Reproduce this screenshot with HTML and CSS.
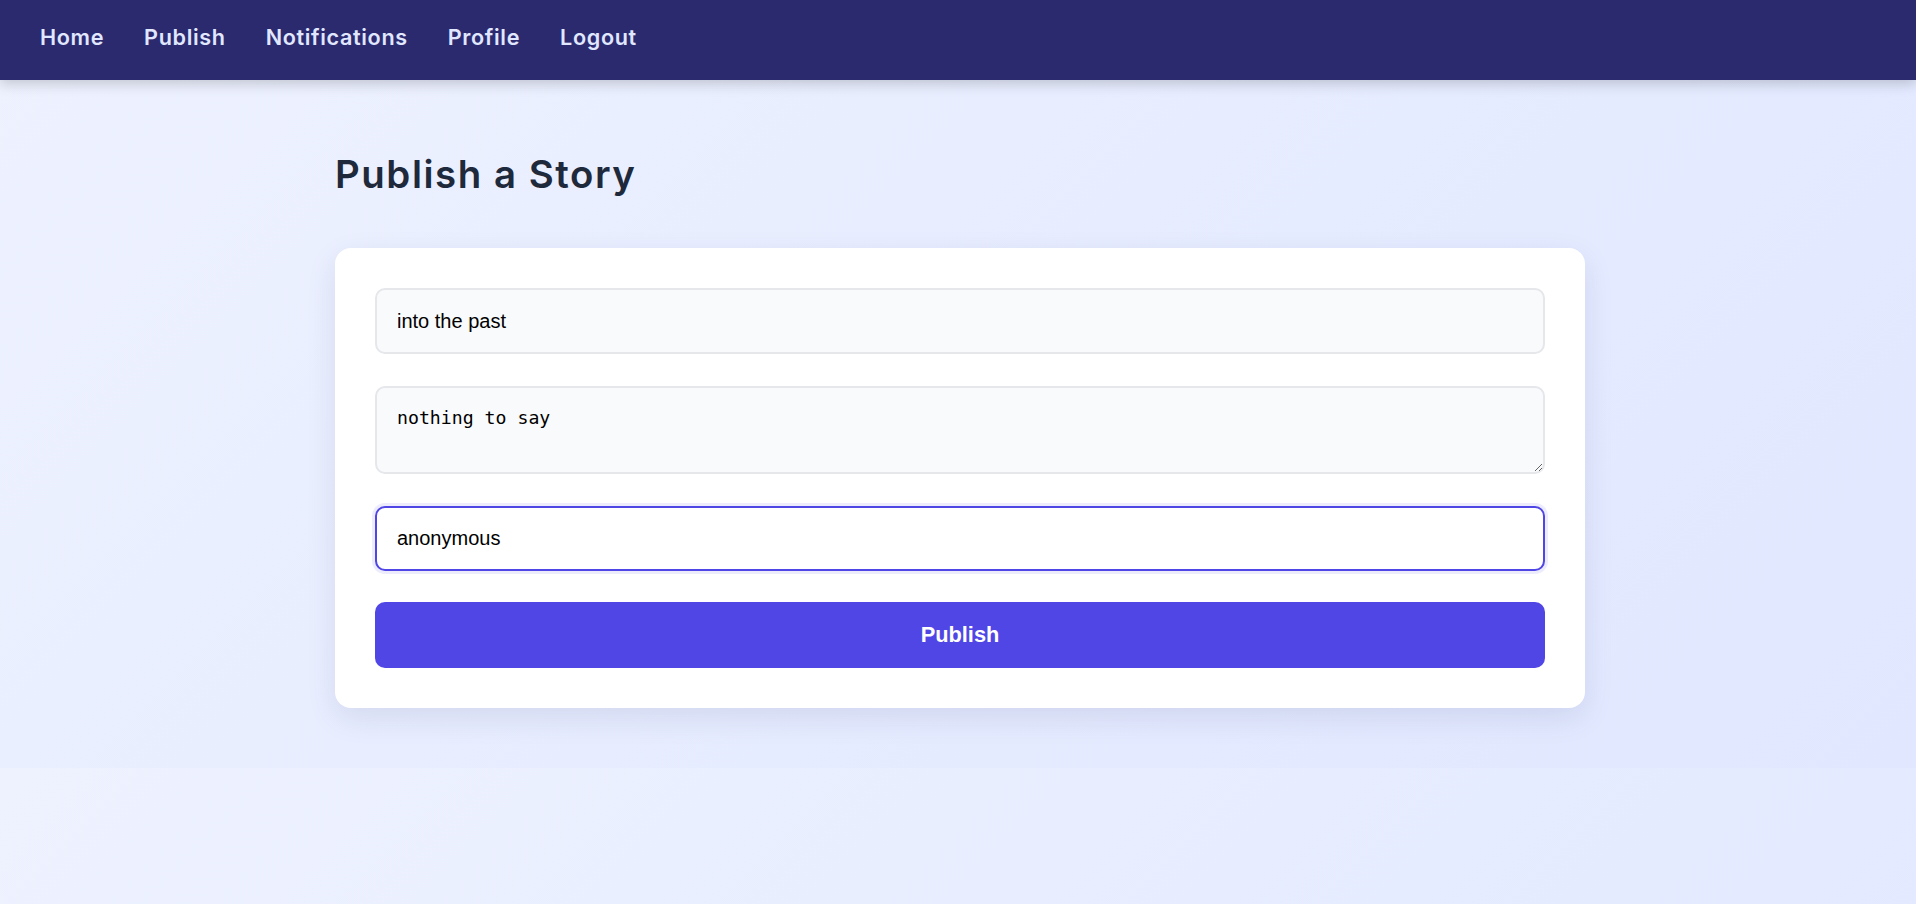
FILE: index.html
```html
<!DOCTYPE html>
<html lang="en">
<head>
<meta charset="utf-8">
<title>Publish a Story</title>
<link rel="stylesheet" href="styles.css">
</head>
<body>
<nav class="topnav">
  <a class="navlink" href="#">Home</a>
  <a class="navlink" href="#">Publish</a>
  <a class="navlink" href="#">Notifications</a>
  <a class="navlink" href="#">Profile</a>
  <a class="navlink" href="#">Logout</a>
</nav>
<main class="container">
  <h1 class="title">Publish a Story</h1>
  <form class="card">
    <input class="field" type="text" value="into the past">
    <textarea class="field area" rows="2">nothing to say</textarea>
    <input class="field focused" id="author" type="text" value="anonymous">
    <button class="submit" type="button">Publish</button>
  </form>
</main>
<script src="script.js"></script>
</body>
</html>
```

FILE: styles.css
```css
html, body {
  margin: 0;
}
body {
  min-height: 85vh;
  background: linear-gradient(135deg, #eef2ff 0%, #e0e7ff 100%);
  font-family: Inter, "Noto Sans", sans-serif;
}
.topnav {
  height: 80px;
  background: #2b2a6f;
  display: flex;
  align-items: center;
  gap: 40px;
  padding: 0 40px 6px 40px;
  box-shadow: 0 4px 12px rgba(0, 0, 0, 0.18);
  box-sizing: border-box;
}
.navlink {
  color: #e0e7ff;
  text-decoration: none;
  font-weight: 600;
  font-size: 21.6px;
  letter-spacing: 0.65px;
}
.container {
  width: 1250px;
  margin: 0 auto;
  padding: 1px 0 0 4px;
}
.title {
  margin: 70px 0 0 0;
  color: #1e293b;
  font-size: 38.4px;
  font-weight: 600;
  line-height: 46px;
  letter-spacing: 1.55px;
}
.card {
  margin-top: 51px;
  background: #ffffff;
  border-radius: 16px;
  padding: 40px;
  box-shadow: 0 10px 30px rgba(30, 41, 99, 0.10);
  display: flex;
  flex-direction: column;
  gap: 32px;
}
.field {
  display: block;
  box-sizing: border-box;
  width: 100%;
  margin: 0;
  background: #f9fafb;
  border: 2px solid #e5e7eb;
  border-radius: 10px;
  padding: 20px 20px;
  font-family: "Liberation Sans", Arial, sans-serif;
  font-size: 20px;
  line-height: 22px;
  height: 66px;
  color: #000;
  outline: none;
}
.area {
  font-family: "DejaVu Sans Mono", "Liberation Mono", monospace;
  font-size: 18.2px;
  line-height: 23px;
  height: 88px;
  padding-top: 18px;
}
.focused {
  background: #ffffff;
  border-color: #4f46e5;
  box-shadow: 0 0 0 3px rgba(79, 70, 229, 0.10);
  height: 65px;
  caret-color: #000;
}
.submit {
  height: 66px;
  margin-top: -1px;
  border: none;
  border-radius: 10px;
  background: #4f46e5;
  color: #ffffff;
  font-family: "Liberation Sans", Arial, sans-serif;
  font-weight: 700;
  font-size: 21.8px;
  cursor: pointer;
}
```

FILE: script.js
```js
var el = document.getElementById('author');
el.focus();
el.setSelectionRange(el.value.length, el.value.length);
```
